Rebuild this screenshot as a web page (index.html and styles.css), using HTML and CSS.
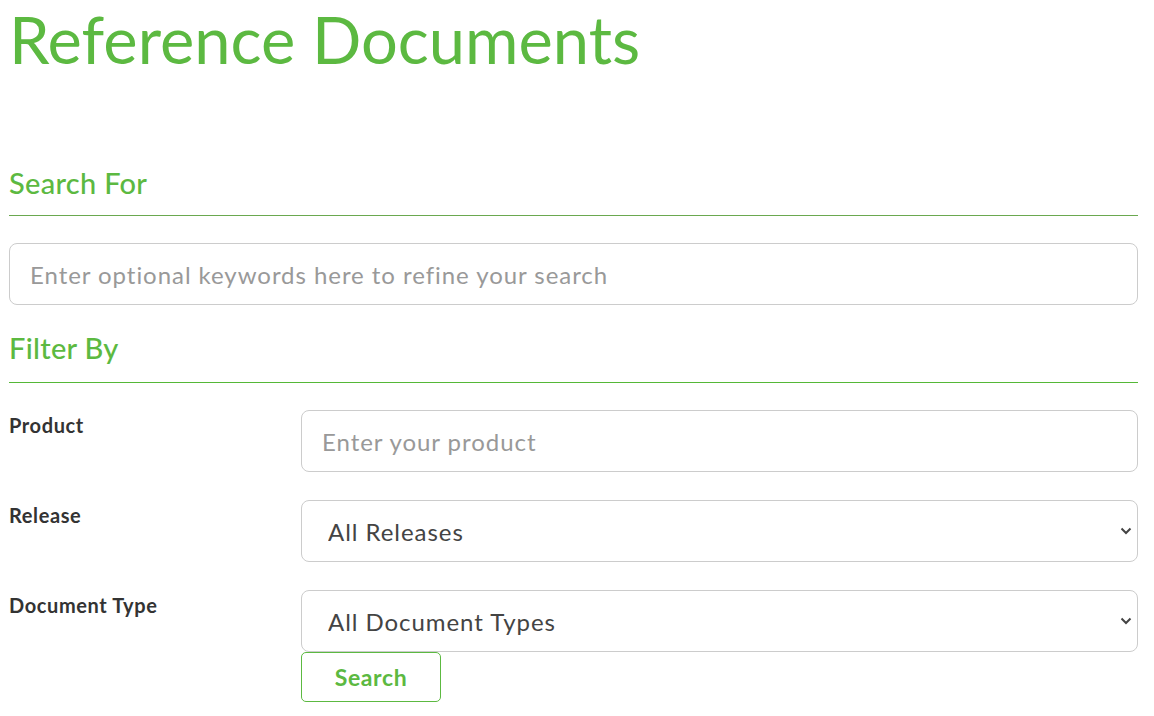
FILE: index.html
```html
<!DOCTYPE html>
<html lang="en">
<head>
<meta charset="UTF-8">
<meta name="viewport" content="width=device-width, initial-scale=1.0">
<title>Reference Documents</title>
<link rel="stylesheet" href="styles.css">
</head>
<body>
    <div class="page">
        <h1 class="title">Reference Documents</h1>

        <h2 class="section-title">Search For</h2>
        <hr class="rule rule-muted">
        <input type="text" class="field" placeholder="Enter optional keywords here to refine your search">

        <h2 class="section-title filter">Filter By</h2>
        <hr class="rule rule-filter">

        <div class="form-row first">
            <label for="product">Product</label>
            <input type="text" id="product" class="field" placeholder="Enter your product">
        </div>
        <div class="form-row">
            <label for="release">Release</label>
            <select id="release" class="field select">
                <option>All Releases</option>
            </select>
        </div>
        <div class="form-row">
            <label for="doctype">Document Type</label>
            <select id="doctype" class="field select">
                <option>All Document Types</option>
            </select>
        </div>
        <div class="button-row">
            <button class="btn-search">Search</button>
        </div>
    </div>
</body>
</html>
```

FILE: styles.css
```css
body {
    margin: 0;
    padding: 0;
    font-family: Lato, "Open Sans", sans-serif;
    color: #333;
    background: #fff;
}
.page {
    width: 1129px;
    padding-left: 9px;
}
.title {
    margin: 0;
    font-size: 65px;
    font-weight: 400;
    line-height: 78px;
    color: #5cb941;
}
.section-title {
    margin: 87px 0 0 0;
    font-size: 29px;
    font-weight: 500;
    line-height: 36px;
    letter-spacing: 0.3px;
    color: #5cb941;
}
.section-title.filter {
    margin-top: 25px;
}
.rule {
    margin: 14px 0 0 0;
    border: 0;
    border-top: 1px solid #55b837;
}
.rule-muted {
    border-top-color: #6aa84f;
    margin-bottom: 27px;
}
.rule-filter {
    margin-top: 16px;
}
.field {
    display: block;
    box-sizing: border-box;
    width: 100%;
    height: 62px;
    padding: 0 20px;
    border: 1px solid #ccc;
    border-radius: 8px;
    background: #fff;
    font-family: inherit;
    font-size: 24px;
    letter-spacing: 0.95px;
    color: #444;
}
.field::placeholder {
    color: #999;
}
.select {
    appearance: none;
    padding-left: 26px;
    background-image: url("data:image/svg+xml,%3Csvg xmlns='http://www.w3.org/2000/svg' width='12' height='8' viewBox='0 0 12 8'%3E%3Cpath d='M1.5 1.5l4.5 4.5 4.5-4.5' fill='none' stroke='%23444' stroke-width='2'/%3E%3C/svg%3E");
    background-repeat: no-repeat;
    background-position: right 5px center;
}
.form-row {
    display: flex;
    margin-top: 28px;
}
.form-row.first {
    margin-top: 27px;
}
.form-row label {
    width: 292px;
    flex: none;
    padding-top: 3px;
    font-size: 20px;
    font-weight: 700;
    letter-spacing: 0.6px;
    color: #333;
}
.form-row .field {
    flex: 1;
    width: auto;
}
.button-row {
    padding-left: 292px;
}
.btn-search {
    width: 140px;
    height: 50px;
    border: 1px solid #5cb941;
    border-radius: 5px;
    background: #fff;
    font-family: inherit;
    font-size: 23px;
    font-weight: 700;
    letter-spacing: 0.6px;
    color: #5cb941;
    cursor: pointer;
}
```
